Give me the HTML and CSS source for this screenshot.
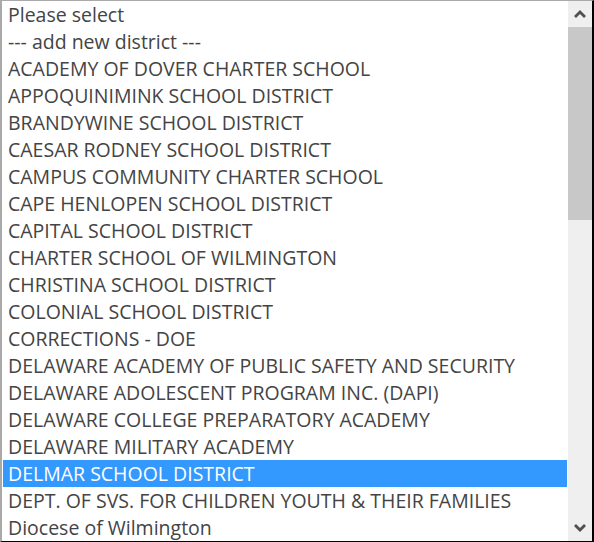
FILE: index.html
```html
<!DOCTYPE html>
<html>
<head>
<meta charset="utf-8">
<link rel="stylesheet" href="styles.css">
</head>
<body>
<div class="listbox">
  <ul class="options">
    <li class="opt">Please select</li>
    <li class="opt">--- add new district ---</li>
    <li class="opt">ACADEMY OF DOVER CHARTER SCHOOL</li>
    <li class="opt">APPOQUINIMINK SCHOOL DISTRICT</li>
    <li class="opt">BRANDYWINE SCHOOL DISTRICT</li>
    <li class="opt">CAESAR RODNEY SCHOOL DISTRICT</li>
    <li class="opt">CAMPUS COMMUNITY CHARTER SCHOOL</li>
    <li class="opt">CAPE HENLOPEN SCHOOL DISTRICT</li>
    <li class="opt">CAPITAL SCHOOL DISTRICT</li>
    <li class="opt">CHARTER SCHOOL OF WILMINGTON</li>
    <li class="opt">CHRISTINA SCHOOL DISTRICT</li>
    <li class="opt">COLONIAL SCHOOL DISTRICT</li>
    <li class="opt">CORRECTIONS - DOE</li>
    <li class="opt">DELAWARE ACADEMY OF PUBLIC SAFETY AND SECURITY</li>
    <li class="opt">DELAWARE ADOLESCENT PROGRAM INC. (DAPI)</li>
    <li class="opt">DELAWARE COLLEGE PREPARATORY ACADEMY</li>
    <li class="opt">DELAWARE MILITARY ACADEMY</li>
    <li class="opt selected">DELMAR SCHOOL DISTRICT</li>
    <li class="opt">DEPT. OF SVS. FOR CHILDREN YOUTH &amp; THEIR FAMILIES</li>
    <li class="opt">Diocese of Wilmington</li>
  </ul>
  <div class="scrollbar">
    <div class="btn">
      <svg width="12" height="8" viewBox="0 0 12 8"><path d="M0 6 L6 0 L12 6 L10 8 L6 4 L2 8 Z" fill="#505050"/></svg>
    </div>
    <div class="track">
      <div class="thumb"></div>
    </div>
    <div class="btn">
      <svg width="12" height="8" viewBox="0 0 12 8"><path d="M0 2 L6 8 L12 2 L10 0 L6 4 L2 0 Z" fill="#505050"/></svg>
    </div>
  </div>
</div>
</body>
</html>
```

FILE: styles.css
```css
html, body {
  margin: 0;
  padding: 0;
  background: #ffffff;
}
.listbox {
  width: 594px;
  height: 542px;
  box-sizing: border-box;
  border-top: 1px solid #a9a9a9;
  border-left: 2px solid #a9a9a9;
  border-right: 2px solid #000000;
  border-bottom: 1px solid #000000;
  display: flex;
  overflow: hidden;
  background: #ffffff;
}
.options {
  list-style: none;
  margin: 0;
  padding: 0 1px 0 1px;
  flex: 1;
  font-family: "Open Sans", sans-serif;
  font-size: 19.5px;
  color: #444444;
}
.opt {
  height: 27px;
  line-height: 28px;
  padding-left: 5px;
  white-space: nowrap;
}
.opt.selected {
  background: #3399ff;
  color: #ffffff;
}
.scrollbar {
  width: 24px;
  display: flex;
  flex-direction: column;
  background: #efefef;
}
.btn {
  height: 26px;
  display: flex;
  align-items: center;
  justify-content: center;
  flex: none;
}
.track {
  flex: 1;
}
.thumb {
  height: 193px;
  background: #c8c8c8;
}
```
